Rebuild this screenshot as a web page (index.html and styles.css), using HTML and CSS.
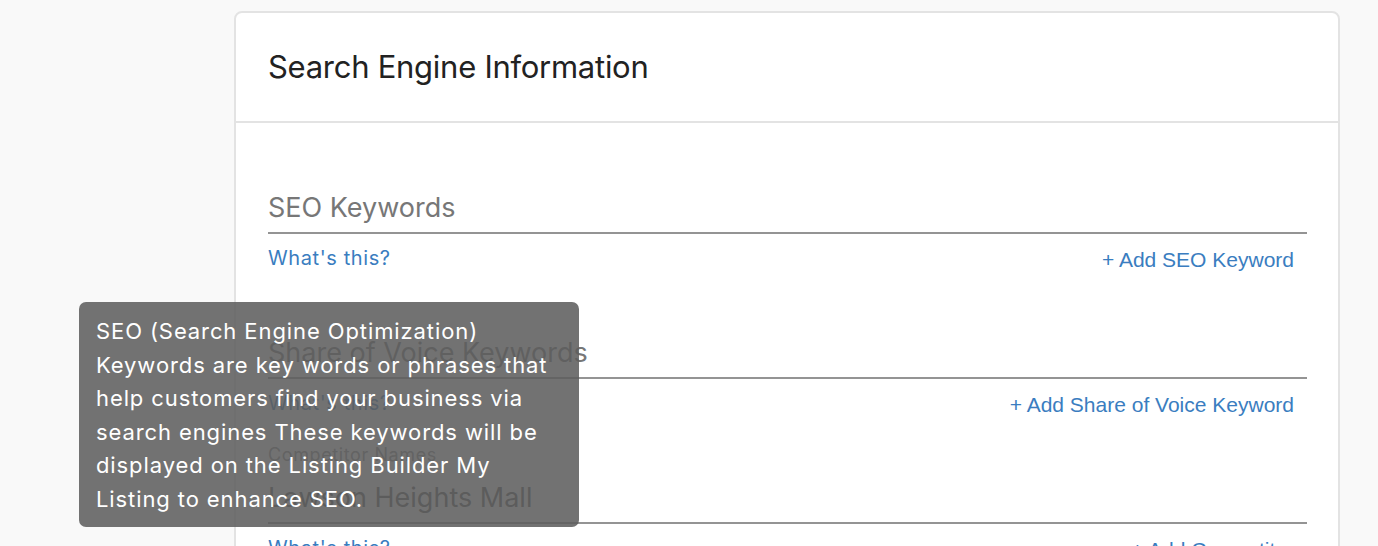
FILE: index.html
```html
<!DOCTYPE html>
<html lang="en">
<head>
<meta charset="utf-8">
<title>Search Engine Information</title>
<link rel="stylesheet" href="styles.css">
</head>
<body>
<div class="page">
  <section class="card">
    <header class="card-header">
      <h2 class="card-title">Search Engine Information</h2>
    </header>
    <div class="card-body">
      <div class="field">
        <div class="input-wrap">
          <span class="placeholder">SEO Keywords</span>
        </div>
        <div class="help-row">
          <a class="help-link" href="#">What's this?</a>
          <a class="add-link" href="#">+ Add SEO Keyword</a>
        </div>
      </div>
      <div class="field">
        <div class="input-wrap">
          <span class="placeholder">Share of Voice Keywords</span>
        </div>
        <div class="help-row">
          <a class="help-link" href="#">What's this?</a>
          <a class="add-link" href="#">+ Add Share of Voice Keyword</a>
        </div>
      </div>
      <div class="field">
        <div class="input-wrap">
          <span class="float-label">Competitor Names</span>
          <span class="value">Lawson Heights Mall</span>
        </div>
        <div class="help-row">
          <a class="help-link" href="#">What's this?</a>
          <a class="add-link" href="#">+ Add Competitor</a>
        </div>
      </div>
    </div>
  </section>
  <div class="tooltip" role="tooltip">SEO (Search Engine Optimization) Keywords are key words or phrases that help customers find your business via search engines These keywords will be displayed on the Listing Builder My Listing to enhance SEO.</div>
</div>
</body>
</html>
```
FILE: styles.css
```css
* { box-sizing: border-box; }
html, body { margin: 0; padding: 0; }
body {
  background: #f9f9f9;
  font-family: Inter, "Noto Sans", sans-serif;
  color: #222;
}
.page {
  position: relative;
  padding: 11px 38px 0 234px;
}
.card {
  background: #fff;
  border: 2px solid #e3e3e3;
  border-radius: 8px;
  width: 1106px;
}
.card-header {
  height: 110px;
  border-bottom: 2px solid #e3e3e3;
  display: flex;
  align-items: center;
  padding: 0 32px 2px;
}
.card-title {
  margin: 0;
  font-weight: 400;
  font-size: 31px;
  color: #222;
  letter-spacing: -0.27px;
}
.card-body {
  padding: 34px 31px 0 32px;
}
.field {
  height: 145px;
  display: flex;
  flex-direction: column;
}
.input-wrap {
  height: 77px;
  border-bottom: 2px solid #949494;
  display: flex;
  flex-direction: column;
  justify-content: flex-end;
  padding-bottom: 9px;
}
.placeholder, .value {
  font-size: 27px;
  line-height: 30px;
  color: #777;
}
.value { color: #555; }
.float-label {
  font-size: 18px;
  line-height: 20px;
  letter-spacing: 0.6px;
  color: #888;
  margin-bottom: 18px;
}
.help-row {
  display: flex;
  justify-content: space-between;
  align-items: flex-start;
  font-size: 20px;
  line-height: 24px;
}
.help-link, .add-link {
  color: #3a7dc0;
  text-decoration: none;
}
.help-link {
  margin-top: 12px;
  letter-spacing: 0.6px;
}
.add-link {
  margin-top: 14px;
  margin-right: 13px;
  font-family: "Liberation Sans", Arial, sans-serif;
  font-size: 21px;
}
.tooltip {
  position: absolute;
  left: 79px;
  top: 302px;
  width: 500px;
  height: 225px;
  padding: 13px 16px 12px 17px;
  background: rgba(93, 93, 93, 0.87);
  border-radius: 7px;
  color: #fff;
  font-size: 22px;
  letter-spacing: 0.9px;
  line-height: 33.5px;
}
```
